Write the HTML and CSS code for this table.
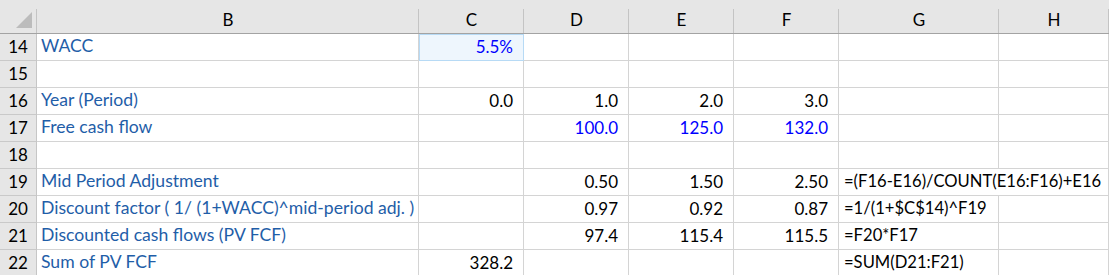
FILE: index.html
```html
<!DOCTYPE html>
<html>
<head>
<meta charset="utf-8">
<link rel="stylesheet" href="styles.css">
</head>
<body>
<div class="sheet">
  <div class="hd corner"><svg class="tri" width="17" height="17" viewBox="0 0 17 17"><polygon points="16,0 16,16 0,16" fill="#bcbcbc"/></svg></div>
  <div class="hd col">B</div>
  <div class="hd col">C</div>
  <div class="hd col">D</div>
  <div class="hd col">E</div>
  <div class="hd col">F</div>
  <div class="hd col">G</div>
  <div class="hd col">H</div>

  <div class="rh">14</div>
  <div class="c lbl">WACC</div>
  <div class="c num inp sel">5.5%</div>
  <div class="c"></div><div class="c"></div><div class="c"></div><div class="c"></div><div class="c"></div>

  <div class="rh">15</div>
  <div class="c"></div><div class="c"></div><div class="c"></div><div class="c"></div><div class="c"></div><div class="c"></div><div class="c"></div>

  <div class="rh">16</div>
  <div class="c lbl">Year (Period)</div>
  <div class="c num">0.0</div>
  <div class="c num">1.0</div>
  <div class="c num">2.0</div>
  <div class="c num">3.0</div>
  <div class="c"></div><div class="c"></div>

  <div class="rh">17</div>
  <div class="c lbl">Free cash flow</div>
  <div class="c"></div>
  <div class="c num inp">100.0</div>
  <div class="c num inp">125.0</div>
  <div class="c num inp">132.0</div>
  <div class="c"></div><div class="c"></div>

  <div class="rh">18</div>
  <div class="c"></div><div class="c"></div><div class="c"></div><div class="c"></div><div class="c"></div><div class="c"></div><div class="c"></div>

  <div class="rh">19</div>
  <div class="c lbl">Mid Period Adjustment</div>
  <div class="c"></div>
  <div class="c num">0.50</div>
  <div class="c num">1.50</div>
  <div class="c num">2.50</div>
  <div class="c txt span2">=(F16-E16)/COUNT(E16:F16)+E16</div>

  <div class="rh">20</div>
  <div class="c lbl">Discount factor ( 1/ (1+WACC)^mid-period adj. )</div>
  <div class="c"></div>
  <div class="c num">0.97</div>
  <div class="c num">0.92</div>
  <div class="c num">0.87</div>
  <div class="c txt">=1/(1+$C$14)^F19</div>
  <div class="c"></div>

  <div class="rh">21</div>
  <div class="c lbl">Discounted cash flows (PV FCF)</div>
  <div class="c"></div>
  <div class="c num">97.4</div>
  <div class="c num">115.4</div>
  <div class="c num">115.5</div>
  <div class="c txt">=F20*F17</div>
  <div class="c"></div>

  <div class="rh">22</div>
  <div class="c lbl">Sum of PV FCF</div>
  <div class="c num">328.2</div>
  <div class="c"></div><div class="c"></div><div class="c"></div>
  <div class="c txt">=SUM(D21:F21)</div>
  <div class="c"></div>
</div>
</body>
</html>
```
FILE: styles.css
```css
html, body {
  margin: 0;
  padding: 0;
  background: #ffffff;
}
body {
  font-family: "Lato", "Liberation Sans", sans-serif;
  font-size: 17px;
  color: #000;
  overflow: hidden;
}
.sheet {
  display: grid;
  grid-template-columns: 37px 382px 105px 105px 105px 105px 160px 1fr;
  grid-template-rows: 34px repeat(9, 27px);
  width: 1109px;
}
.hd {
  background: linear-gradient(#c4c4c4, #c4c4c4) right 9px / 1px calc(100% - 9px) no-repeat, #e6e6e6;
  border-bottom: 1px solid #a3a3a3;
  display: flex;
  align-items: flex-end;
  justify-content: center;
  padding-bottom: 5px;
  box-sizing: border-box;
  line-height: 1;
}
.corner {
  justify-content: flex-end;
  padding: 0 4px 4px 0;
}
.tri { display: block; }
.rh {
  background: #e6e6e6;
  border-right: 1px solid #c6c6c6;
  border-bottom: 1px solid #c9c9c9;
  box-sizing: border-box;
  display: flex;
  align-items: flex-end;
  justify-content: center;
  padding-bottom: 5px;
  line-height: 1;
}
.c {
  border-right: 1px solid #d4d4d4;
  border-bottom: 1px solid #d4d4d4;
  box-sizing: border-box;
  display: flex;
  align-items: flex-end;
  padding: 0 5px 5px 5px;
  line-height: 1;
  white-space: nowrap;
}
.lbl {
  color: #1f5ea8;
  padding-left: 4px;
  font-size: 17.6px;
}
.num {
  justify-content: flex-end;
  padding-right: 10px;
}
.inp { color: #0000ff; }
.sel {
  background: #eef6fd;
  border: 1px solid #b7daf5;
}
.txt {
  justify-content: flex-start;
  font-size: 16.6px;
}
.span2 {
  grid-column: span 2;
}
```
